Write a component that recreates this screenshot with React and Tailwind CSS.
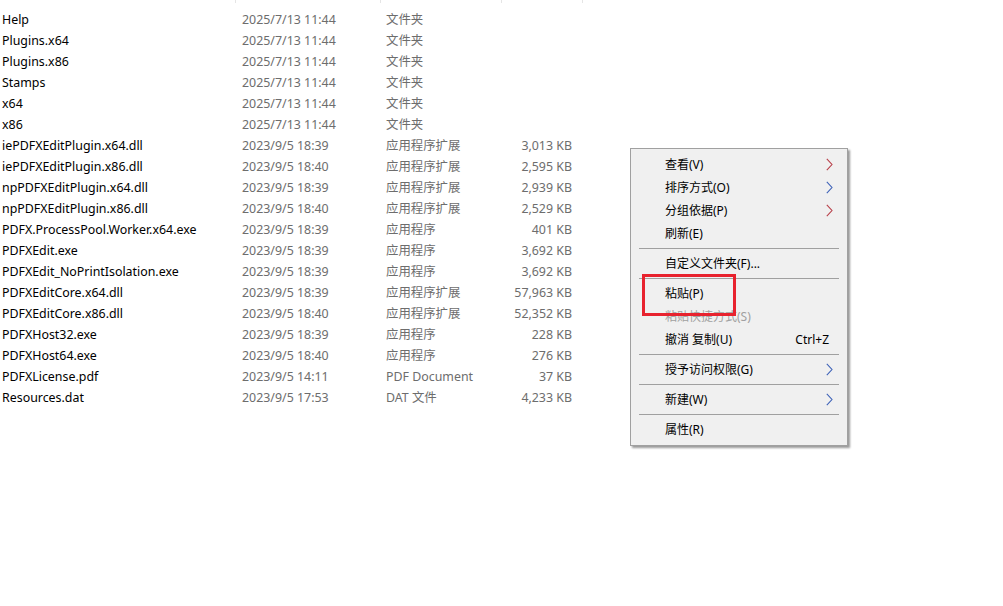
import React from "react";

const FILES = [
  ["Help", "2025/7/13 11:44", "文件夹", ""],
  ["Plugins.x64", "2025/7/13 11:44", "文件夹", ""],
  ["Plugins.x86", "2025/7/13 11:44", "文件夹", ""],
  ["Stamps", "2025/7/13 11:44", "文件夹", ""],
  ["x64", "2025/7/13 11:44", "文件夹", ""],
  ["x86", "2025/7/13 11:44", "文件夹", ""],
  ["iePDFXEditPlugin.x64.dll", "2023/9/5 18:39", "应用程序扩展", "3,013 KB"],
  ["iePDFXEditPlugin.x86.dll", "2023/9/5 18:40", "应用程序扩展", "2,595 KB"],
  ["npPDFXEditPlugin.x64.dll", "2023/9/5 18:39", "应用程序扩展", "2,939 KB"],
  ["npPDFXEditPlugin.x86.dll", "2023/9/5 18:40", "应用程序扩展", "2,529 KB"],
  ["PDFX.ProcessPool.Worker.x64.exe", "2023/9/5 18:39", "应用程序", "401 KB"],
  ["PDFXEdit.exe", "2023/9/5 18:39", "应用程序", "3,692 KB"],
  ["PDFXEdit_NoPrintIsolation.exe", "2023/9/5 18:39", "应用程序", "3,692 KB"],
  ["PDFXEditCore.x64.dll", "2023/9/5 18:39", "应用程序扩展", "57,963 KB"],
  ["PDFXEditCore.x86.dll", "2023/9/5 18:40", "应用程序扩展", "52,352 KB"],
  ["PDFXHost32.exe", "2023/9/5 18:39", "应用程序", "228 KB"],
  ["PDFXHost64.exe", "2023/9/5 18:40", "应用程序", "276 KB"],
  ["PDFXLicense.pdf", "2023/9/5 14:11", "PDF Document", "37 KB"],
  ["Resources.dat", "2023/9/5 17:53", "DAT 文件", "4,233 KB"],
];

// context menu: item | "sep"
const MENU = [
  { label: "查看(V)", sub: "#b8404a" },
  { label: "排序方式(O)", sub: "#3f63b8" },
  { label: "分组依据(P)", sub: "#b8404a" },
  { label: "刷新(E)" },
  "sep",
  { label: "自定义文件夹(F)..." },
  "sep",
  { label: "粘贴(P)" },
  { label: "粘贴快捷方式(S)", disabled: true },
  { label: "撤消 复制(U)", shortcut: "Ctrl+Z" },
  "sep",
  { label: "授予访问权限(G)", sub: "#3f63b8" },
  "sep",
  { label: "新建(W)", sub: "#3f63b8" },
  "sep",
  { label: "属性(R)" },
];

const font = "font-['Noto_Sans','Noto_Sans_CJK_SC',sans-serif]";

export default function App() {
  return (
    <div className={`relative h-[606px] w-[1003px] overflow-hidden bg-white text-[12px] ${font}`}>
      {/* header stubs */}
      <div className="flex h-[3px]">
        <div className="w-[236px] border-r border-[#e5e5e5]" />
        <div className="w-[145px] border-r border-[#e5e5e5]" />
        <div className="w-[121px] border-r border-[#e5e5e5]" />
        <div className="w-[81px] border-r border-[#e5e5e5]" />
      </div>

      <div className="mt-[6px] text-[12.4px]">
        {FILES.map(([name, date, type, size]) => (
          <div key={name} className="flex h-[21px] items-center leading-[21px]">
            <div className="w-[236px] pl-[2px] text-black">{name}</div>
            <div className="w-[145px] pl-[6px] text-[#6d6d6d]">{date}</div>
            <div className="w-[121px] pl-[5px] text-[#6d6d6d]">{type}</div>
            <div className="w-[70px] text-right text-[#6d6d6d]">{size}</div>
          </div>
        ))}
      </div>

      <ContextMenu />
    </div>
  );
}

function ContextMenu() {
  return (
    <div className="absolute left-[630px] top-[148px] w-[218px] border border-[#a0a0a0] bg-[#f0f0f0] py-[4px] shadow-[2px_2px_2px_rgba(0,0,0,0.4)]">
      {MENU.map((m, i) =>
        m === "sep" ? (
          <div key={i} className="flex h-[7px] items-center px-[8px]">
            <div className="h-px w-full bg-[#a0a0a0]" />
          </div>
        ) : (
          <div key={i} className="flex h-[23px] items-center pl-[34px] pr-[18px]">
            <span className={m.disabled ? "text-[#a0a0a0]" : "text-black"}>{m.label}</span>
            <span className="flex-1" />
            {m.shortcut && <span className="text-black">{m.shortcut}</span>}
            {m.sub && (
              <svg width="7" height="13" viewBox="0 0 7 13" className="-mr-[4px]">
                <path d="M0.8 0.8 L6 6.5 L0.8 12.2" fill="none" stroke={m.sub} strokeWidth="1.1" />
              </svg>
            )}
          </div>
        )
      )}
      {/* highlight box around 粘贴 */}
      <div className="absolute left-[11px] top-[125px] h-[42px] w-[94px] border-[3px] border-[#e8222e]" />
    </div>
  );
}
